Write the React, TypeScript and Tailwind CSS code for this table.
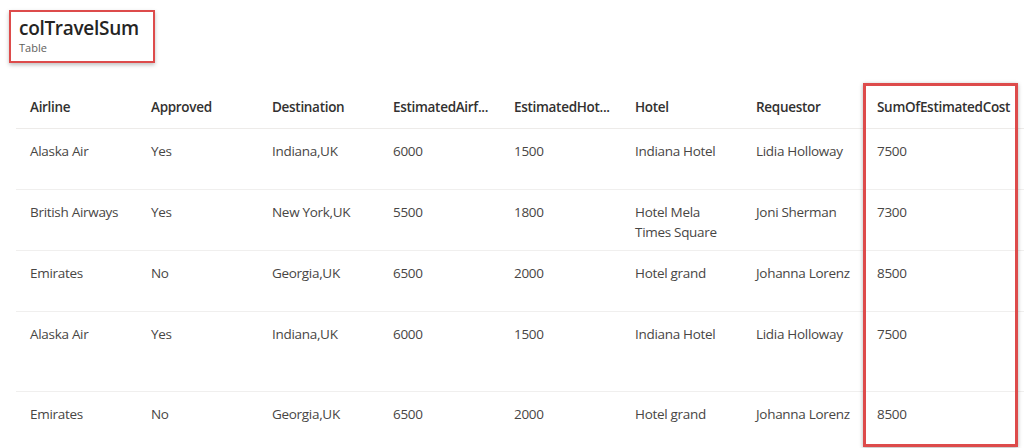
import React from 'react';

// Spaltenkopf der Tabelle
const columns = [
    'Airline',
    'Approved',
    'Destination',
    'EstimatedAirf...',
    'EstimatedHot...',
    'Hotel',
    'Requestor',
    'SumOfEstimatedCost',
];

// Zeilen: [Werte, Zeilenhöhe]
const rows: { cells: string[]; tall?: boolean }[] = [
    { cells: ['Alaska Air', 'Yes', 'Indiana,UK', '6000', '1500', 'Indiana Hotel', 'Lidia Holloway', '7500'] },
    { cells: ['British Airways', 'Yes', 'New York,UK', '5500', '1800', 'Hotel Mela Times Square', 'Joni Sherman', '7300'] },
    { cells: ['Emirates', 'No', 'Georgia,UK', '6500', '2000', 'Hotel grand', 'Johanna Lorenz', '8500'] },
    { cells: ['Alaska Air', 'Yes', 'Indiana,UK', '6000', '1500', 'Indiana Hotel', 'Lidia Holloway', '7500'], tall: true },
    { cells: ['Emirates', 'No', 'Georgia,UK', '6500', '2000', 'Hotel grand', 'Johanna Lorenz', '8500'] },
];

export default function App() {
    return (
        <div
            className="relative w-[1024px] h-[448px] overflow-hidden bg-white"
            style={{ fontFamily: '"Open Sans", "Noto Sans", sans-serif' }}
        >
            {/* Titel-Box */}
            <div className="ml-[9px] mt-[10px] w-[146px] h-[53px] border-2 border-[#dd4b4b] shadow-[0_2px_4px_rgba(0,0,0,0.25)] pl-[8px] pt-[3px]">
                <div className="text-[19px] leading-[26px] font-semibold text-[#252423] tracking-[-0.3px]">colTravelSum</div>
                <div className="text-[11px] leading-[14px] text-[#605e5c]">Table</div>
            </div>

            {/* Tabelle */}
            <div className="mt-[22px] ml-[16px]">
                <div className="flex border-b border-[#edebe9] h-[44px] pt-3">
                    {columns.map((c, i) => (
                        <div
                            key={c}
                            className={`${i === 7 ? 'flex-1' : 'w-[121px]'} pl-[14px] text-[13.5px] leading-5 font-semibold text-[#323130] whitespace-nowrap tracking-[-0.3px]`}
                        >
                            {c}
                        </div>
                    ))}
                </div>
                {rows.map((r, ri) => (
                    <div
                        key={ri}
                        className={`flex border-b border-[#f0efee] pt-3 ${r.tall ? 'h-[80px]' : 'h-[61px]'}`}
                    >
                        {r.cells.map((v, i) => (
                            <div
                                key={i}
                                className={`${i === 7 ? 'flex-1' : 'w-[121px]'} pl-[14px] pr-2 text-[13.5px] leading-5 text-[#484644] tracking-[-0.3px]`}
                            >
                                {v}
                            </div>
                        ))}
                    </div>
                ))}
            </div>

            {/* Markierung der letzten Spalte */}
            <div className="absolute left-[863px] top-[83px] w-[155px] h-[364px] border-[3px] border-[#dd4b4b] shadow-[0_1px_4px_rgba(0,0,0,0.3)] pointer-events-none" />
        </div>
    );
}
